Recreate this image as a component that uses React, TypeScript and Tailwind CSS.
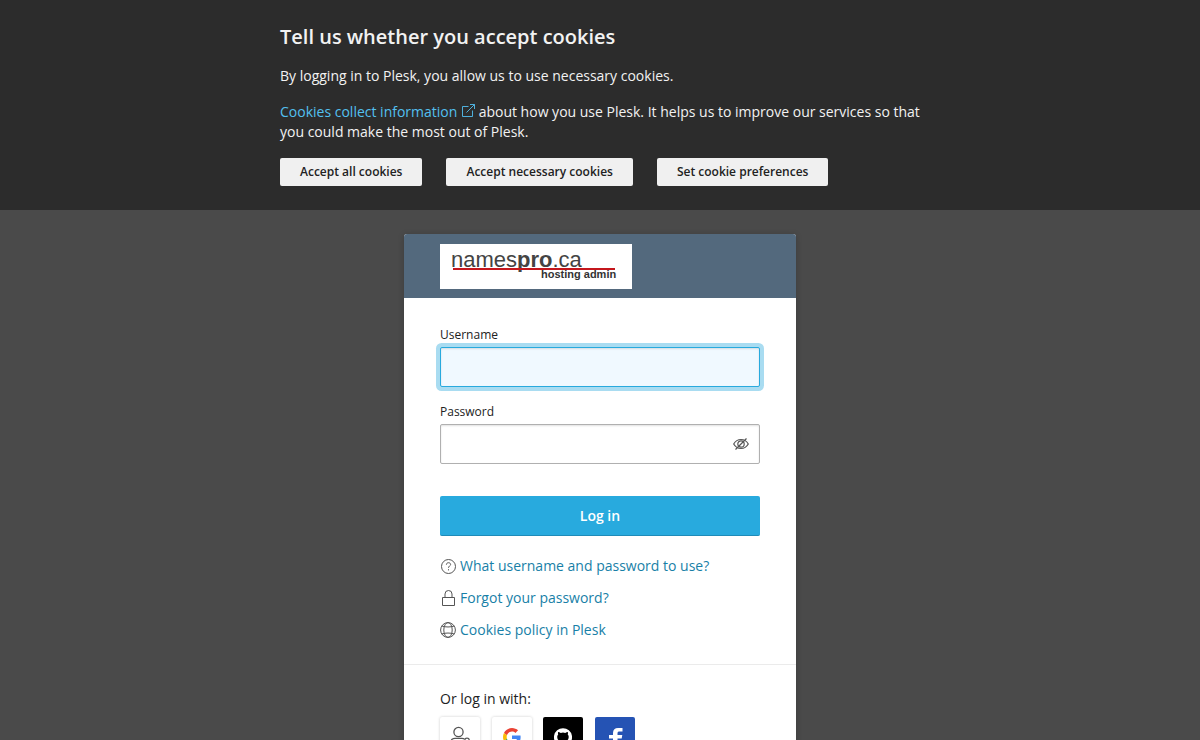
import type { ReactNode } from 'react';

const FONT = "font-['Open_Sans','Noto_Sans',sans-serif]";

function ExternalIcon() {
  return (
    <svg width="14" height="14" viewBox="0 0 14 14" fill="none" stroke="currentColor" strokeWidth="0.9" className="inline-block align-[-1px]" aria-hidden="true">
      <path d="M7.5 2.5H1.5v10h10v-6M5.500 8.500l8-8M9 .5h4.500V5" />
    </svg>
  );
}

function EyeOffIcon() {
  return (
    <svg width="16" height="16" viewBox="0 0 16 16" fill="none" stroke="currentColor" strokeWidth="1.2" aria-hidden="true">
      <path d="M.7 8C2.400 5 5 3.500 8 3.500S13.600 5 15.300 8C13.600 11 11 12.500 8 12.500S2.400 11 .7 8z" />
      <circle cx="8" cy="8" r="3.200" />
      <path d="M2.500 13.500l11-11" />
    </svg>
  );
}

function HelpIcon() {
  return (
    <svg width="16" height="16" viewBox="0 0 16 16" fill="none" stroke="currentColor" aria-hidden="true">
      <circle cx="8.500" cy="8.500" r="7" />
      <path d="M6.400 6.700C6.400 5.400 7.300 4.700 8.500 4.700s2.100.7 2.100 1.800C10.600 7.900 8.500 8.100 8.500 9.800M8.500 11.200v1.200" />
    </svg>
  );
}

function LockIcon() {
  return (
    <svg width="16" height="16" viewBox="0 0 16 16" fill="none" stroke="currentColor" aria-hidden="true">
      <path d="M2.500 7.500h12v8h-12zM5 7.500V4a3.500 3.500 0 0 1 7 0v3.500" />
    </svg>
  );
}

function GlobeIcon() {
  return (
    <svg width="16" height="16" viewBox="0 0 16 16" fill="none" stroke="currentColor" aria-hidden="true">
      <circle cx="8" cy="8" r="7.400" />
      <ellipse cx="8" cy="8" rx="4.200" ry="7.400" />
      <path d="M1.800 4C5 5.300 11 5.300 14.200 4M1.800 12c3.200-1.300 9.200-1.300 12.400 0" />
    </svg>
  );
}

function UsersIcon() {
  return (
    <svg width="24" height="24" viewBox="0 0 24 24" fill="none" stroke="#555" strokeWidth="1.300" aria-hidden="true">
      <circle cx="10.500" cy="7" r="4.600" />
      <path d="M3 20v-3c0-2.500 1.700-3.700 4-3.700h7c1 0 1.800.2 2.400.7M3 20h12" />
      <circle cx="19" cy="15.500" r="2.300" />
      <path d="M15.500 21.500c0-2 1.400-3 3.500-3s3.500 1 3.500 3" />
    </svg>
  );
}

function GoogleIcon() {
  return (
    <svg width="18" height="18" viewBox="0 0 48 48" aria-hidden="true">
      <path fill="#EA4335" d="M24 9.500c3.540 0 6.710 1.220 9.210 3.600l6.850-6.850C35.900 2.380 30.470 0 24 0 14.620 0 6.510 5.380 2.560 13.220l7.980 6.190C12.430 13.720 17.740 9.500 24 9.500z" />
      <path fill="#4285F4" d="M46.980 24.550c0-1.570-.15-3.090-.38-4.550H24v9.020h12.940c-.58 2.960-2.260 5.480-4.780 7.180l7.730 6c4.510-4.180 7.090-10.360 7.090-17.650z" />
      <path fill="#FBBC05" d="M10.530 28.590c-.48-1.450-.76-2.990-.76-4.590s.27-3.140.76-4.590l-7.980-6.190C.92 16.460 0 20.120 0 24c0 3.880.92 7.540 2.560 10.780l7.970-6.190z" />
      <path fill="#34A853" d="M24 48c6.480 0 11.930-2.130 15.890-5.810l-7.730-6c-2.150 1.450-4.920 2.300-8.160 2.300-6.260 0-11.570-4.220-13.470-9.910l-7.980 6.190C6.510 42.620 14.620 48 24 48z" />
    </svg>
  );
}

function GitHubIcon() {
  return (
    <svg width="18" height="18" viewBox="0 0 24 24" fill="#fff" aria-hidden="true">
      <path d="M12 .3a12 12 0 0 0-3.800 23.400c.6.100.8-.3.800-.6v-2c-3.300.7-4-1.600-4-1.600-.6-1.400-1.400-1.800-1.400-1.800-1-.7.1-.7.1-.7 1.200 0 1.900 1.200 1.900 1.200 1 1.800 2.800 1.300 3.500 1 0-.8.4-1.300.7-1.600-2.700-.3-5.500-1.300-5.500-6 0-1.200.5-2.300 1.300-3.100-.2-.4-.6-1.600 0-3.200 0 0 1-.3 3.400 1.200a11.500 11.500 0 0 1 6 0c2.300-1.500 3.300-1.200 3.300-1.200.6 1.600.2 2.800 0 3.200.9.8 1.300 1.900 1.300 3.200 0 4.600-2.800 5.600-5.500 5.900.5.400.9 1 .9 2.200v3.300c0 .3.100.7.800.6A12 12 0 0 0 12 .3" />
    </svg>
  );
}

function FacebookIcon() {
  return (
    <svg width="18" height="18" viewBox="0 0 18 18" fill="#fff" aria-hidden="true">
      <path d="M7 18v-7.500H3V7h4V5c0-3.300 2-5 5-5h4.500v3.500h-2.700C12 3.500 11.500 4 11.500 5.200V7h4.800l-.6 3.500h-4.200V18z" />
    </svg>
  );
}

function CookieButton({ children }: { children: ReactNode }) {
  return (
    <button type="button" className="h-7 px-5 rounded-[2px] bg-[#f0f0f0] text-[#222] text-xs font-semibold hover:bg-white">
      {children}
    </button>
  );
}

function CookieBanner() {
  return (
    <section className="bg-[#2c2c2c] text-[#f2f2f2] py-6 px-5 shrink-0">
      <div className="max-w-[640px] mx-auto text-sm leading-5">
        <h2 className="text-xl leading-[26px] font-semibold">Tell us whether you accept cookies</h2>
        <p className="mt-4">By logging in to Plesk, you allow us to use necessary cookies.</p>
        <p className="mt-4">
          <a href="#cookies" className="text-[#53c0f0] hover:underline">
            Cookies collect information <ExternalIcon />
          </a>{' '}
          about how you use Plesk. It helps us to improve our services so that you could make the most out of Plesk.
        </p>
        <div className="flex flex-wrap gap-x-6 gap-y-3 mt-4">
          <CookieButton>Accept all cookies</CookieButton>
          <CookieButton>Accept necessary cookies</CookieButton>
          <CookieButton>Set cookie preferences</CookieButton>
        </div>
      </div>
    </section>
  );
}

function Logo() {
  return (
    <svg width="192" height="45" viewBox="0 0 192 45" role="img" aria-label="namespro.ca hosting admin" fontFamily="'Liberation Sans', Arial, sans-serif">
      <rect width="192" height="45" fill="#fff" />
      <text x="11" y="23" fontSize="22" fill="#444">
        names<tspan fontWeight="700">pro</tspan>.ca
      </text>
      <rect x="13" y="24" width="162" height="2" fill="#c4161c" />
      <text x="101" y="34" fontSize="11" fontWeight="700" fill="#333">hosting admin</text>
    </svg>
  );
}

const helpLinks = [
  { label: 'What username and password to use?', href: '#help', icon: <HelpIcon /> },
  { label: 'Forgot your password?', href: '#forgot', icon: <LockIcon /> },
  { label: 'Cookies policy in Plesk', href: '#policy', icon: <GlobeIcon /> },
];

const providers = [
  { name: 'Plesk', className: 'bg-white shadow-[0_0_3px_rgba(0,0,0,0.2)]', icon: <UsersIcon /> },
  { name: 'Google', className: 'bg-white shadow-[0_0_3px_rgba(0,0,0,0.2)]', icon: <GoogleIcon /> },
  { name: 'GitHub', className: 'bg-black', icon: <GitHubIcon /> },
  { name: 'Facebook', className: 'bg-[#2553b4]', icon: <FacebookIcon /> },
];

function LoginCard() {
  return (
    <div className="w-full max-w-[392px] mx-auto bg-white rounded-[3px] shadow-[0_1px_6px_rgba(0,0,0,0.2)] overflow-hidden">
      <header className="flex items-center h-16 px-9 bg-[#53697d]">
        <Logo />
      </header>

      <form className="px-9 pt-7 pb-6" onSubmit={e => e.preventDefault()}>
        <div className="flex flex-col gap-4">
          <div>
            <label htmlFor="username" className="block mb-1 text-xs leading-[17px]">Username</label>
            <input
              id="username"
              type="text"
              className="block w-full h-10 px-3 rounded-[2px] border border-[#28aade] bg-[#f0f9ff] outline-none shadow-[0_0_0_4px_#a9dcf1,inset_0_1px_2px_rgba(0,0,0,0.12)]"
            />
          </div>
          <div>
            <label htmlFor="password" className="block mb-1 text-xs leading-[17px]">Password</label>
            <div className="relative">
              <input
                id="password"
                type="password"
                className="block w-full h-10 pl-3 pr-10 rounded-[2px] border border-[#b0b0b0] bg-white outline-none shadow-[inset_0_1px_2px_rgba(0,0,0,0.12)]"
              />
              <button type="button" aria-label="Show password" className="absolute inset-y-0 right-0 w-[38px] flex items-center justify-center text-[#555]">
                <EyeOffIcon />
              </button>
            </div>
          </div>
        </div>

        <button type="submit" className="block w-full h-10 mt-8 rounded-[2px] bg-[#28aade] border-b border-[#1f8bb8] text-white text-sm font-semibold">
          Log in
        </button>

        <ul className="flex flex-col gap-3 mt-5 text-sm leading-5">
          {helpLinks.map(link => (
            <li key={link.href} className="flex items-center gap-1 text-[#555]">
              {link.icon}
              <a href={link.href} className="text-[#187fa7] hover:underline">{link.label}</a>
            </li>
          ))}
        </ul>
      </form>

      <div className="px-9 pt-6 pb-9 border-t border-[#ebebeb]">
        <p className="text-sm leading-5">Or log in with:</p>
        <div className="mt-2 text-sm">
          {providers.map(provider => (
            <span key={provider.name}>
              <button
                type="button"
                aria-label={provider.name}
                className={`w-10 h-10 mr-2 inline-flex items-center justify-center align-top rounded-[2px] ${provider.className}`}
              >
                {provider.icon}
              </button>{' '}
            </span>
          ))}
        </div>
      </div>
    </div>
  );
}

export default function App() {
  return (
    <div className={`flex flex-col h-screen bg-[#4a4a4a] text-[#222] ${FONT}`}>
      <CookieBanner />
      <main className="flex-1 min-h-0 overflow-y-auto [scrollbar-width:none] py-6">
        <LoginCard />
      </main>
    </div>
  );
}
